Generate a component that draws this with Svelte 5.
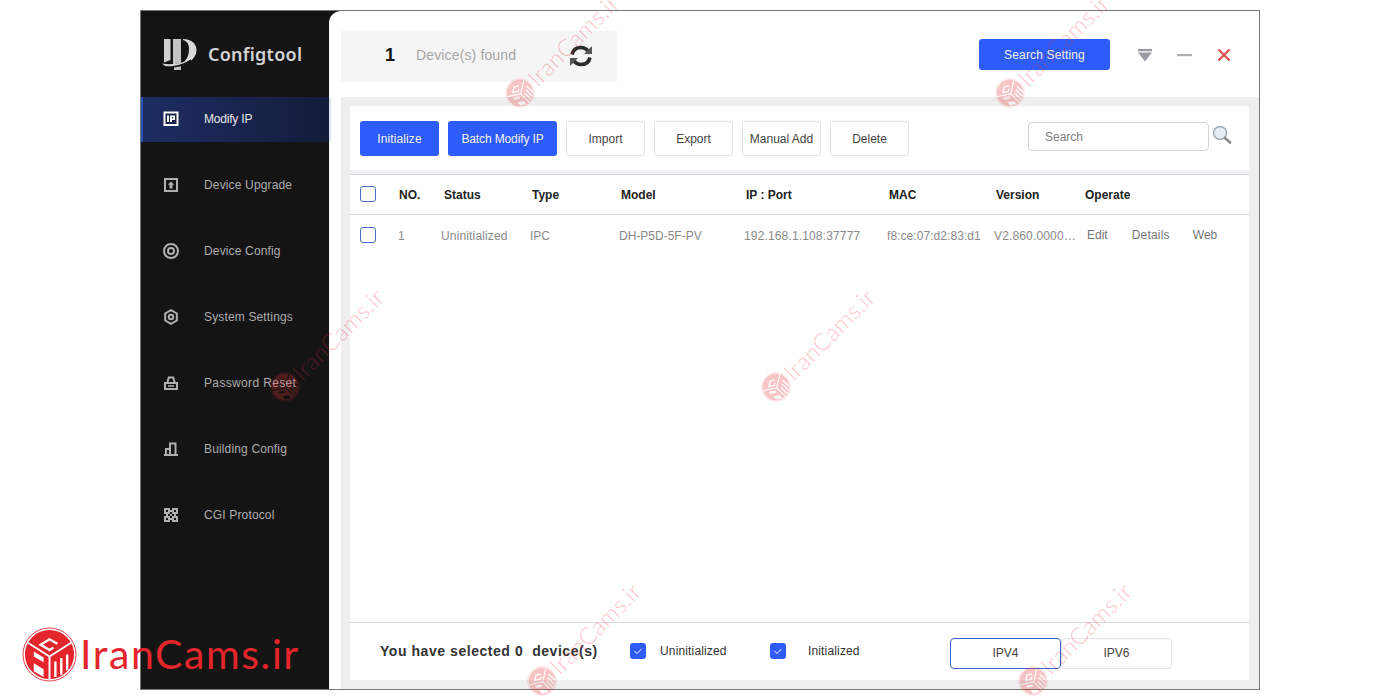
<script lang="ts">
	const nav = [
		{ id: 'ip', label: 'Modify IP' },
		{ id: 'upgrade', label: 'Device Upgrade' },
		{ id: 'config', label: 'Device Config' },
		{ id: 'system', label: 'System Settings' },
		{ id: 'password', label: 'Password Reset' },
		{ id: 'building', label: 'Building Config' },
		{ id: 'cgi', label: 'CGI Protocol' }
	];
	const actions = ['Import', 'Export', 'Manual Add', 'Delete'];
	const marks = [
		{ x: 505, y: 78 },
		{ x: 995, y: 78 },
		{ x: 270, y: 372 },
		{ x: 761, y: 372 },
		{ x: 527, y: 666 },
		{ x: 1018, y: 666 }
	];
</script>

{#snippet brandLogo(cls)}
	<svg class={cls} viewBox="0 0 56 56" aria-hidden="true">
		<mask id="logo-cut">
			<rect width="56" height="56" fill="#fff" />
			<g fill="none" stroke="#000" stroke-width="2">
				<path d="M28 30V54M28 30L6 16M28 30L50 16" />
				<path stroke-width="2.400" d="M36 17L28 12.500L19 18L28 23.500L32 21" />
				<path stroke-width="2.400" d="M34 35V51M40 31.500V48.500M46 28V44" />
			</g>
			<path fill="#000" d="M12 25L22 31V36L12 30z M12 37L22 43V51L12 45z" />
		</mask>
		<circle cx="28" cy="28" r="27" fill="none" stroke="currentColor" stroke-width="0.900" />
		<circle cx="28" cy="28" r="25" fill="currentColor" mask="url(#logo-cut)" />
	</svg>
{/snippet}

{#snippet navIcon(id)}
	<svg class="nav-icon" viewBox="0 0 16 16" aria-hidden="true">
		{#if id === 'ip'}
			<rect x="0.500" y="0.500" width="15" height="14.500" fill="#fff" />
			<rect x="2.500" y="2.500" width="11" height="10.500" fill="#16224a" />
			<path fill="#fff" d="M4 4.500h2v6.500H4z M7 4.500h5v4.500H9v2H7z M9 6v1.500h1.300V6z" />
		{:else if id === 'upgrade'}
			<path fill="#b0b0b0" fill-rule="evenodd" d="M1 1h14v14H1z M3 3v10h10V3z" />
			<path fill="#b0b0b0" d="M8 4.500l3.300 3.300H9.500V11.500h-3V7.800H4.700z" />
		{:else if id === 'config'}
			<circle cx="8" cy="8" r="7" fill="none" stroke="#b0b0b0" stroke-width="2" />
			<circle cx="8" cy="8" r="3" fill="none" stroke="#b0b0b0" stroke-width="2" />
		{:else if id === 'system'}
			<path fill="none" stroke="#b0b0b0" stroke-width="2" d="M8 1.200l5.800 3.300v7L8 14.800l-5.800-3.300v-7z" />
			<circle cx="8" cy="8" r="2.200" fill="none" stroke="#b0b0b0" stroke-width="2" />
		{:else if id === 'password'}
			<path fill="#b0b0b0" fill-rule="evenodd" d="M1 7h14v8H1z M3 9v4h10V9z M3.500 7l1.500-5.500h6L12.500 7h-2L9.500 3.500h-3L5.500 7z M5 10.200h6v1.600H5z" />
		{:else if id === 'building'}
			<path fill="#b0b0b0" d="M1 13h14v2H1z M2 7h2v7H2z M2 7h5v2H2z M6 1.500h2v12H6z M6 1.500h7v2H6z M11.500 1.500h2v12h-2z" />
		{:else}
			<path fill="#b0b0b0" fill-rule="evenodd" d="M1 1h6v6H1z M3 3v2h2V3z M9 1h6v6H9z M11 3v2h2V3z M1 9h6v6H1z M3 11v2h2v-2z M9 9h6v6H9z M11 11v2h2v-2z M7 7h2v2H7z M7 3h2v2H7z M7 11h2v2H7z M3 7h2v2H3z M11 7h2v2h-2z" />
		{/if}
	</svg>
{/snippet}

<div class="page">
	<div class="window">
		<aside class="sidebar">
			<div class="logo">
				<svg class="logo-mark" viewBox="0 0 36 36" aria-hidden="true">
					<path fill="#d0d0d0" d="M2 2h6.500v21l-6.500 2.500z" />
					<path fill="#c4c4c4" d="M11 2h8v31h-7v-5h-1z" />
					<path fill="#d8d8d8" d="M21 2C30 2 34.500 7 34.500 13 34.500 20 29 25 21 28.500V26C25.500 22 27 17 27 12 27 7 25 4 21 3z" />
					<path fill="#141414" d="M0 27.500C9 28 19 27 29 22.500V25C20 30 10 31.500 2 30z" />
					<path fill="#d4d4d4" d="M0 26.500C9 28 19 27 29 22C21 28 11 30 3 29z" />
				</svg>
				<span class="logo-text">Configtool</span>
			</div>
			<nav class="nav">
				{#each nav as item, i}
					<div class="nav-item" class:active={i === 0}>
						{@render navIcon(item.id)}
						<span>{item.label}</span>
					</div>
				{/each}
			</nav>
		</aside>

		<main class="main">
			<header class="topbar">
				<div class="found">
					<b class="count">1</b>
					<span class="found-label">Device(s) found</span>
					<svg class="refresh" viewBox="0 0 24 24" aria-hidden="true">
						<path fill="none" stroke="#2b2b2b" stroke-width="3.600" d="M3 10.500C4 6 7.500 3.500 12 3.500c3 0 5.300 1.200 7 3.300" />
						<path fill="none" stroke="#2b2b2b" stroke-width="3.600" d="M21 13.500c-1 4.500-4.500 7-9 7-3 0-5.300-1.200-7-3.300" />
						<path fill="#555" d="M23 2v8h-8z M1 22v-8h8z" />
					</svg>
				</div>
				<button class="btn primary search-setting">Search Setting</button>
				<div class="window-controls">
					<svg width="16" height="14" viewBox="0 0 16 14" aria-hidden="true">
						<path fill="#9a9aa2" d="M1 1h14v2.200H1z M1 4.500h14L8 13.500z" />
					</svg>
					<svg width="16" height="14" viewBox="0 0 16 14" aria-hidden="true">
						<path fill="#b0b0b0" d="M0 6h15v2.200H0z" />
					</svg>
					<svg width="14" height="14" viewBox="0 0 14 14" aria-hidden="true">
						<path stroke="#d9534f" stroke-width="2.400" d="M1.500 1.500l11 11M12.500 1.500l-11 11" />
					</svg>
				</div>
			</header>

			<div class="content">
				<section class="panel">
					<div class="toolbar">
						<button class="btn primary init">Initialize</button>
						<button class="btn primary batch">Batch Modify IP</button>
						{#each actions as action}
							<button class="btn outline">{action}</button>
						{/each}
						<div class="search">
							<div class="search-box">Search</div>
							<svg class="search-icon" viewBox="0 0 20 20" aria-hidden="true">
								<circle cx="8" cy="8" r="6.500" fill="#e6eef5" stroke="#9aa5ad" stroke-width="1.400" />
								<path stroke="#8f8f8f" stroke-width="2.800" stroke-linecap="round" d="M13 13l5 4.500" />
							</svg>
						</div>
					</div>

					<div class="table">
						<div class="row head">
							<span class="cell check"><i class="box"></i></span>
							<span class="cell no">NO.</span>
							<span class="cell status">Status</span>
							<span class="cell type">Type</span>
							<span class="cell model">Model</span>
							<span class="cell ip">IP : Port</span>
							<span class="cell mac">MAC</span>
							<span class="cell version">Version</span>
							<span class="cell operate">Operate</span>
						</div>
						<div class="row body">
							<span class="cell check"><i class="box"></i></span>
							<span class="cell no">1</span>
							<span class="cell status">Uninitialized</span>
							<span class="cell type">IPC</span>
							<span class="cell model">DH-P5D-5F-PV</span>
							<span class="cell ip">192.168.1.108:37777</span>
							<span class="cell mac">f8:ce:07:d2:83:d1</span>
							<span class="cell version">V2.860.0000…</span>
							<span class="cell operate links">
								<span>Edit</span><span>Details</span><span>Web</span>
							</span>
						</div>
					</div>

					<footer class="footer">
						<span class="selected">You have selected 0&nbsp; device(s)</span>
						<label class="filter first">
							<i class="tick"><svg viewBox="0 0 16 16" aria-hidden="true"><path fill="none" stroke="#fff" d="M4.500 8l2.500 2.500 4.500-4.500" /></svg></i>
							<span>Uninitialized</span>
						</label>
						<label class="filter second">
							<i class="tick"><svg viewBox="0 0 16 16" aria-hidden="true"><path fill="none" stroke="#fff" d="M4.500 8l2.500 2.500 4.500-4.500" /></svg></i>
							<span>Initialized</span>
						</label>
						<div class="ip-switch">
							<button class="ip-btn on">IPV4</button>
							<button class="ip-btn">IPV6</button>
						</div>
					</footer>
				</section>
			</div>
		</main>
	</div>

	{#each marks as m}
		<div class="watermark" style="left: {m.x}px; top: {m.y}px">
			{@render brandLogo('wm-logo')}
			<span class="wm-text">IranCams.ir</span>
		</div>
	{/each}

	<div class="brand">
		{@render brandLogo('brand-logo')}
		<span class="brand-text">IranCams.ir</span>
	</div>
</div>

<style>
	:global(body) {
		margin: 0;
		background: #fff;
		font-family: "Liberation Sans", Arial, sans-serif;
	}

	.page {
		position: relative;
		width: 1400px;
		height: 700px;
		padding: 10px 140px;
		box-sizing: border-box;
		overflow: hidden;
	}

	.window {
		display: flex;
		height: 680px;
		border: 1px solid #777;
		box-sizing: border-box;
		background: #141414;
	}

	.sidebar {
		width: 188px;
		flex: none;
		color: #adadad;
	}

	.logo {
		display: flex;
		align-items: center;
		height: 86px;
		padding-left: 21px;
		gap: 10px;
	}

	.logo-mark {
		width: 36px;
		height: 36px;
		margin-top: 2px;
	}

	.logo-text {
		font-family: "Noto Sans", sans-serif;
		font-size: 18px;
		font-weight: 600;
		color: #d4d4d4;
		letter-spacing: 0.25px;
	}

	.nav {
		display: flex;
		flex-direction: column;
		gap: 21px;
	}

	.nav-item {
		display: flex;
		align-items: center;
		height: 45px;
		box-sizing: border-box;
		padding: 0 0 2px 22px;
		gap: 25px;
		font-size: 12px;
		letter-spacing: 0.15px;
	}

	.nav-item:nth-child(5) {
		letter-spacing: 0.35px;
	}

	.nav-item.active {
		width: 188px;
		position: relative;
		z-index: 1;
		padding-left: 20px;
		border-left: 2px solid #2c50b8;
		background: linear-gradient(90deg, #1c2d63, #141c3a);
		box-shadow: 2px 0 0 #e3e6f2;
		color: #e6e6e6;
		letter-spacing: -0.2px;
	}

	.nav-icon {
		width: 16px;
		height: 16px;
		flex: none;
	}

	.main {
		flex: 1;
		display: flex;
		flex-direction: column;
		min-width: 0;
		background: #fff;
		border-radius: 12px 0 0 0;
	}

	.topbar {
		display: flex;
		align-items: center;
		height: 86px;
		flex: none;
		padding: 0 28px 0 12px;
	}

	.found {
		display: flex;
		align-items: center;
		width: 276px;
		height: 51px;
		margin-top: 5px;
		background: #f5f5f5;
		box-sizing: border-box;
		padding-left: 44px;
	}

	.count {
		font-size: 18px;
		color: #111;
		width: 31px;
		margin-top: -2px;
	}

	.found-label {
		font-size: 14px;
		color: #a6a6a6;
		width: 153px;
		letter-spacing: 0.14px;
		margin-top: -4px;
	}

	.refresh {
		width: 24px;
		height: 24px;
		margin-top: -2px;
	}

	.btn {
		font: inherit;
		font-size: 12px;
		height: 35px;
		padding: 2px 0 0;
		border-radius: 3px;
		box-sizing: border-box;
		cursor: pointer;
	}

	.primary {
		background: #2d5cfa;
		border: 0;
		color: #f2f2f2;
	}

	.outline {
		width: 79px;
		background: #fff;
		border: 1px solid #e2e2e2;
		color: #444;
	}

	.search-setting {
		width: 131px;
		height: 31px;
		margin-left: auto;
		letter-spacing: 0.15px;
	}

	.window-controls {
		display: flex;
		align-items: center;
		gap: 24px;
		margin: 1px 0 0 27px;
	}

	.content {
		flex: 1;
		display: flex;
		min-height: 0;
		margin-left: 12px;
		padding: 9px 10px 9px 9px;
		background: #eee;
	}

	.panel {
		flex: 1;
		display: flex;
		flex-direction: column;
		background: #fff;
		min-width: 0;
	}

	.toolbar {
		display: flex;
		align-items: center;
		height: 64px;
		flex: none;
		padding-left: 10px;
		gap: 9px;
		border-bottom: 4px solid #eff0f4;
		box-sizing: content-box;
	}

	.init {
		width: 79px;
		letter-spacing: 0.1px;
	}

	.batch {
		width: 109px;
		letter-spacing: -0.13px;
	}

	.search {
		display: flex;
		align-items: center;
		margin-left: auto;
		margin-right: 17px;
		margin-top: -3px;
		gap: 3px;
	}

	.search-box {
		width: 181px;
		height: 29px;
		box-sizing: border-box;
		border: 1px solid #d4d4d4;
		border-radius: 4px;
		padding: 1px 0 0 16px;
		line-height: 27px;
		font-size: 12px;
		color: #808080;
	}

	.search-icon {
		width: 20px;
		height: 20px;
		margin-top: -3px;
	}

	.table {
		flex: 1;
		border-top: 1px solid #d8d8d8;
	}

	.row {
		display: grid;
		grid-template-columns: 49px 45px 88px 89px 125px 143px 107px 89px 1fr;
		align-items: center;
		font-size: 12px;
	}

	.head {
		height: 39px;
		border-bottom: 1px solid #d8d8d8;
		font-weight: 700;
		color: #222;
	}

	.body {
		height: 42px;
		color: #8a8a8a;
		grid-template-columns: 48px 43px 89px 89px 125px 143px 107px 93px 1fr;
	}

	.body .status,
	.body .ip,
	.body .version {
		letter-spacing: 0.15px;
	}

	.body .mac {
		letter-spacing: 0.06px;
	}

	.check {
		padding-left: 10px;
		display: flex;
		margin-top: -2px;
	}

	.box {
		display: block;
		width: 16px;
		height: 16px;
		box-sizing: border-box;
		border: 1px solid #4a6fc9;
		border-radius: 3px;
	}

	.links {
		display: flex;
		gap: 24px;
		color: #777;
		margin-top: -2px;
	}

	.links span:nth-child(2) {
		letter-spacing: 0.2px;
	}

	.links span:nth-child(3) {
		margin-left: -1px;
	}

	.footer {
		display: flex;
		align-items: center;
		height: 57px;
		flex: none;
		border-top: 1px solid #d8d8d8;
		padding-left: 30px;
		font-size: 12px;
		color: #333;
	}

	.selected {
		width: 250px;
		font-size: 14px;
		font-weight: 700;
		color: #333;
		margin-top: -2px;
		letter-spacing: 0.55px;
	}

	.filter {
		display: flex;
		align-items: center;
		margin-top: -2px;
		letter-spacing: 0.15px;
	}

	.first {
		gap: 14px;
		width: 140px;
	}

	.second {
		gap: 22px;
		width: 180px;
	}

	.tick {
		display: block;
		width: 16px;
		height: 16px;
		border-radius: 3px;
		background: #2d5cfa;
	}

	.tick svg {
		display: block;
	}

	.ip-switch {
		display: flex;
		margin-top: 3px;
	}

	.ip-btn {
		width: 111px;
		height: 31px;
		font: inherit;
		font-size: 12px;
		color: #444;
		background: #fff;
		border: 1px solid #e2e2e2;
		border-radius: 4px;
		padding: 0;
	}

	.ip-btn.on {
		border-color: #3a62c8;
	}

	.watermark {
		position: absolute;
		display: flex;
		align-items: center;
		gap: 1px;
		height: 30px;
		color: #e8333a;
		opacity: 0.28;
		transform: rotate(-45deg);
		transform-origin: 15px 15px;
		pointer-events: none;
		white-space: nowrap;
	}

	.wm-logo {
		width: 30px;
		height: 30px;
		flex: none;
	}

	.wm-text {
		font-family: Lato, sans-serif;
		font-weight: 300;
		font-size: 23.5px;
		letter-spacing: 0.4px;
	}

	.brand {
		position: absolute;
		left: 22px;
		top: 627px;
		display: flex;
		align-items: center;
		gap: 3px;
		color: #e4262c;
		white-space: nowrap;
	}

	.brand-logo {
		width: 55px;
		height: 55px;
		flex: none;
	}

	.brand-text {
		font-family: Lato, sans-serif;
		font-size: 41px;
		letter-spacing: 1.6px;
		margin-top: -2px;
	}
</style>
